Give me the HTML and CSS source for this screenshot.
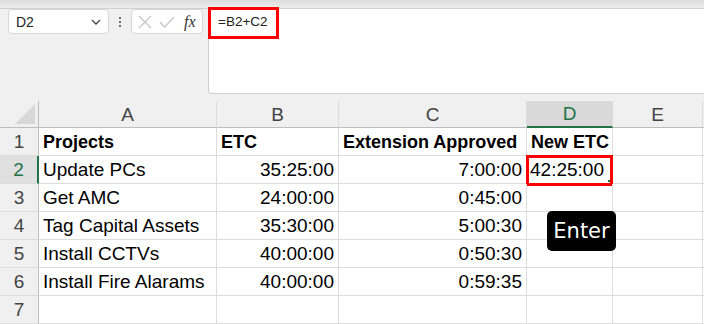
FILE: index.html
```html
<!DOCTYPE html>
<html lang="en">
<head>
    <meta charset="UTF-8">
    <title>Sheet - New ETC</title>
    <link rel="stylesheet" href="styles.css">
</head>
<body>

    <div class="top-strip"></div>

    <div class="toolbar">
        <div class="name-box">
            <span>D2</span>
            <svg class="chevron" width="10" height="6" viewBox="0 0 10 6"><path d="M1 1 L5 5 L9 1" fill="none" stroke="#444" stroke-width="1.3"/></svg>
        </div>
        <div class="dots"><i></i><i></i><i></i></div>
        <div class="fn-box">
            <svg width="14" height="14" viewBox="0 0 14 14"><path d="M1 1 L13 13 M13 1 L1 13" stroke="#c4c4c4" stroke-width="1.2"/></svg>
            <svg width="16" height="12" viewBox="0 0 16 12"><path d="M1 6 L5.5 11 L15 1" fill="none" stroke="#c4c4c4" stroke-width="1.2"/></svg>
            <span class="fx">fx</span>
        </div>
        <div class="formula-bar">
            <span class="formula">=B2+C2</span>
            <div class="red-box formula-mark"></div>
        </div>
    </div>

    <div class="sheet">
        <div class="corner"><div class="triangle"></div></div>
        <div class="col-head">A</div>
        <div class="col-head">B</div>
        <div class="col-head">C</div>
        <div class="col-head selected">D</div>
        <div class="col-head">E</div>
        <div class="col-head"></div>

        <div class="row-head">1</div>
        <div class="cell bold">Projects</div>
        <div class="cell bold">ETC</div>
        <div class="cell bold">Extension Approved</div>
        <div class="cell bold">New ETC</div>
        <div class="cell"></div>
        <div class="cell"></div>

        <div class="row-head selected">2</div>
        <div class="cell">Update PCs</div>
        <div class="cell num">35:25:00</div>
        <div class="cell num">7:00:00</div>
        <div class="cell num active">42:25:00<div class="red-box"></div><b class="handle"></b></div>
        <div class="cell"></div>
        <div class="cell"></div>

        <div class="row-head">3</div>
        <div class="cell">Get AMC</div>
        <div class="cell num">24:00:00</div>
        <div class="cell num">0:45:00</div>
        <div class="cell"></div>
        <div class="cell"></div>
        <div class="cell"></div>

        <div class="row-head">4</div>
        <div class="cell">Tag Capital Assets</div>
        <div class="cell num">35:30:00</div>
        <div class="cell num">5:00:30</div>
        <div class="cell"></div>
        <div class="cell"></div>
        <div class="cell"></div>

        <div class="row-head">5</div>
        <div class="cell">Install CCTVs</div>
        <div class="cell num">40:00:00</div>
        <div class="cell num">0:50:30</div>
        <div class="cell"></div>
        <div class="cell"></div>
        <div class="cell"></div>

        <div class="row-head">6</div>
        <div class="cell">Install Fire Alarams</div>
        <div class="cell num">40:00:00</div>
        <div class="cell num">0:59:35</div>
        <div class="cell"></div>
        <div class="cell"></div>
        <div class="cell"></div>

        <div class="row-head">7</div>
        <div class="cell"></div>
        <div class="cell"></div>
        <div class="cell"></div>
        <div class="cell"></div>
        <div class="cell"></div>
        <div class="cell"></div>

        <div class="enter-key">Enter</div>
    </div>

</body>
</html>
```

FILE: styles.css
```css
body {
    margin: 0;
    width: 704px;
    height: 324px;
    overflow: hidden;
    background: #ffffff;
    font-family: 'Liberation Sans', Arial, sans-serif;
    color: #000;
}

.top-strip {
    height: 8px;
    background: linear-gradient(#dcdcdc, #ececec);
    border-bottom: 1px solid #d0d0d0;
}

.toolbar {
    display: flex;
    align-items: flex-start;
    height: 92px;
    padding-left: 8px;
    background: #f0f0f0;
}

.name-box {
    box-sizing: border-box;
    width: 101px;
    height: 25px;
    display: flex;
    align-items: center;
    justify-content: space-between;
    padding: 0 7px 0 7px;
    background: #fff;
    border: 1px solid #d6d6d6;
    border-radius: 4px;
    font-size: 14px;
    color: #222;
}

.chevron {
    margin-top: 1px;
}

.dots {
    width: 22px;
    height: 25px;
    display: flex;
    flex-direction: column;
    align-items: center;
    justify-content: center;
    gap: 2px;
}

.dots i {
    width: 2px;
    height: 2px;
    background: #444;
    border-radius: 1px;
}

.fn-box {
    box-sizing: border-box;
    width: 72px;
    height: 25px;
    display: flex;
    align-items: center;
    gap: 7px;
    padding-left: 6px;
    background: #fff;
    border: 1px solid #d6d6d6;
    border-radius: 4px;
}

.fx {
    font-family: 'Liberation Serif', serif;
    font-style: italic;
    font-size: 16px;
    color: #333;
    margin-left: 2px;
}

.formula-bar {
    position: relative;
    box-sizing: border-box;
    flex: 1;
    height: 85px;
    margin-left: 5px;
    background: #fff;
    border-left: 1px solid #d0d0d0;
    border-bottom: 1px solid #d0d0d0;
    border-bottom-left-radius: 4px;
}

.formula {
    display: block;
    padding: 5px 0 0 9px;
    font-size: 13.5px;
    color: #222;
}

.red-box {
    position: absolute;
    box-sizing: border-box;
    border: 3px solid #ff0000;
    inset: -1px -1px -3px -1px;
}

.formula-mark {
    inset: auto;
    left: -1px;
    top: -2px;
    width: 71px;
    height: 32px;
}

.sheet {
    position: relative;
    display: grid;
    grid-template-columns: 39px 178px 122px 188px 86px 90px 1fr;
    grid-template-rows: 27px repeat(7, 28px);
    font-size: 19px;
}

.corner,
.col-head,
.row-head {
    box-sizing: border-box;
    background: #f0f0f0;
    color: #444;
    display: flex;
    align-items: center;
    justify-content: center;
}

.corner {
    position: relative;
    border-right: 1px solid #bdbdbd;
    border-bottom: 1px solid #bdbdbd;
}

.triangle {
    position: absolute;
    right: 3px;
    bottom: 3px;
    width: 0;
    height: 0;
    border-left: 20px solid transparent;
    border-bottom: 20px solid #d8d8d8;
}

.col-head {
    border-right: 1px solid #dcdcdc;
    border-bottom: 1px solid #bdbdbd;
    padding-top: 1px;
}

.col-head.selected {
    background: #d9d9d9;
    color: #217346;
    border-bottom: 2px solid #217346;
}

.row-head {
    border-right: 1px solid #bdbdbd;
    border-bottom: 1px solid #dcdcdc;
}

.row-head.selected {
    background: #e0e0e0;
    color: #217346;
    border-right: 2px solid #217346;
}

.cell {
    position: relative;
    box-sizing: border-box;
    border-right: 1px solid #dcdcdc;
    border-bottom: 1px solid #dcdcdc;
    padding: 0 4px;
    line-height: 28px;
    white-space: nowrap;
}

.cell.bold {
    font-weight: bold;
    font-size: 18px;
}

.cell.num {
    text-align: right;
}

.cell.active {
    text-align: left;
    padding-left: 3px;
}

.handle {
    position: absolute;
    right: 2px;
    bottom: 1px;
    width: 2px;
    height: 2px;
    background: #217346;
}

.enter-key {
    position: absolute;
    left: 547px;
    top: 110px;
    width: 69px;
    height: 40px;
    box-sizing: border-box;
    background: #000;
    color: #fff;
    border-radius: 5px;
    font-family: 'DejaVu Sans', sans-serif;
    font-size: 21px;
    line-height: 40px;
    text-align: center;
}
```
